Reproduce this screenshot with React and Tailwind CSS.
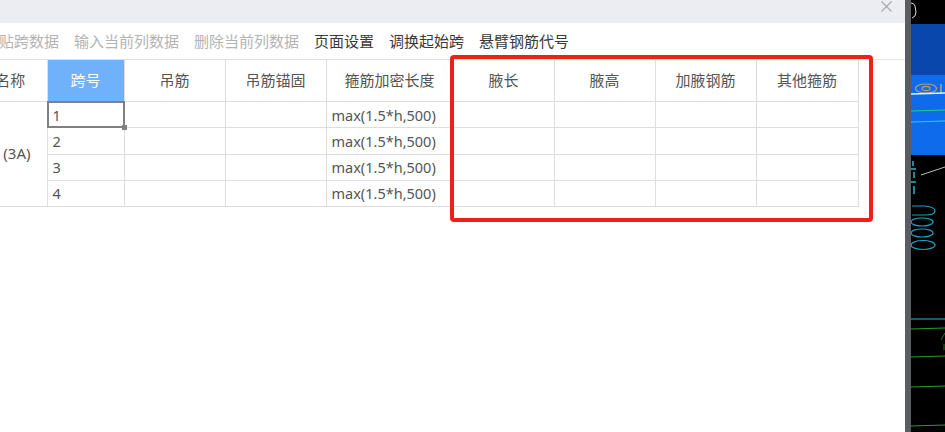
const cjk = { fontFamily: '"Noto Sans", "Noto Sans CJK SC", sans-serif' };

const toolbarItems = [
  { label: "粘贴跨数据", disabled: true },
  { label: "输入当前列数据", disabled: true },
  { label: "删除当前列数据", disabled: true },
  { label: "页面设置" },
  { label: "调换起始跨" },
  { label: "悬臂钢筋代号" },
];

const headers = ["吊筋", "吊筋锚固", "箍筋加密长度", "腋长", "腋高", "加腋钢筋", "其他箍筋"];
const rows = [
  { id: "1", h: "h-[26px]", text: "pt-[2px]" },
  { id: "2", h: "h-[27px]", text: "" },
  { id: "3", h: "h-[26px]", text: "" },
  { id: "4", h: "h-[26px]", text: "" },
];

const cell = "border border-[#dedede] p-0";

function CadPanel() {
  return (
    <svg className="h-full w-full block" viewBox="0 0 34 432">
      <rect width="34" height="432" fill="#000" />
      <path d="M0 3 Q3 3 4 6 L5 12 Q5 17 1 18" fill="none" stroke="#ddd" strokeWidth="1" />
      <rect y="24" width="34" height="51" fill="#0a47ad" />
      <rect y="75" width="34" height="80" fill="#0e6cec" />
      <g fill="none" stroke="#b59c78" strokeWidth="1.2">
        <ellipse cx="15" cy="88.5" rx="10.5" ry="4.5" />
        <ellipse cx="15" cy="88.5" rx="4" ry="2.2" />
        <path d="M30 84 V93" strokeWidth="1.6" />
      </g>
      <line x1="0" y1="94" x2="34" y2="93" stroke="#e4eefc" strokeWidth="1.5" />
      <line x1="0" y1="111" x2="34" y2="110" stroke="#1fd07a" strokeWidth="1" />
      <line x1="0" y1="122" x2="34" y2="121" stroke="#35c8f0" strokeWidth="1" />
      <path d="M2 161v5M0 169h5M3 172v6M0 182h5M3 186v8" stroke="#1a8c9c" strokeWidth="2" fill="none" />
      <line x1="10" y1="175" x2="34" y2="167" stroke="#b8b8b8" strokeWidth="1" />
      <g fill="none" stroke="#1d9fc4" strokeWidth="1.2">
        <path d="M1 206 H14 Q24 207 24 211 Q24 215 14 215 H1" />
        <ellipse cx="11" cy="222" rx="11" ry="4" />
        <ellipse cx="11" cy="233" rx="11" ry="4" />
        <ellipse cx="12" cy="245" rx="12" ry="4.5" />
      </g>
      <line x1="0" y1="319" x2="34" y2="319" stroke="#2bb6d0" strokeWidth="1" />
      <g stroke="#25a025" strokeWidth="1">
        <line x1="0" y1="329" x2="34" y2="328" />
        <line x1="0" y1="357" x2="34" y2="356" />
        <line x1="0" y1="387" x2="34" y2="386" />
        <line x1="0" y1="426" x2="34" y2="425" />
      </g>
      <path d="M30 340 L34 333 M33 344 V350" stroke="#1b7a1b" strokeWidth="1" />
    </svg>
  );
}

export default function App() {
  return (
    <div className="relative flex h-[432px] w-[945px] overflow-hidden bg-white" style={cjk}>
      {/* Dialog */}
      <div className="w-[905px] shrink-0 overflow-hidden">
        <div className="flex h-[23px] justify-end bg-[#ecedf2] pr-[13px]">
          <svg className="mt-px h-[11px] w-[11px]" viewBox="0 0 11 11" stroke="#a9a9ad" strokeWidth="1.2">
            <path d="M0.5 0.5 L10.5 10.5 M10.5 0.5 L0.5 10.5" />
          </svg>
        </div>

        <div className="-ml-[16px] flex h-[36px] items-center gap-[15px] text-[15px] whitespace-nowrap">
          {toolbarItems.map((item) => (
            <span key={item.label} className={item.disabled ? "text-[#b4b4b4]" : "text-[#3a3a3a]"}>
              {item.label}
            </span>
          ))}
        </div>

        {/* Table */}
        <div className="border-t border-[#e6e6e6]">
          <table className="-ml-[29px] -mt-px w-[887px] table-fixed border-collapse text-[15px] text-[#555]">
            <colgroup>
              <col className="w-[76px]" />
              <col className="w-[77px]" />
              <col className="w-[101px]" />
              <col className="w-[101px]" />
              <col className="w-[127px]" />
              <col className="w-[101px]" />
              <col className="w-[101px]" />
              <col className="w-[101px]" />
              <col className="w-[102px]" />
            </colgroup>
            <thead>
              <tr className="h-[42px]">
                <th className={`${cell} border-l-0 pl-[3px] font-normal`}>名称</th>
                <th className={`${cell} bg-[#70b1fb] font-normal text-white`}>跨号</th>
                {headers.map((h) => (
                  <th key={h} className={`${cell} font-normal`}>
                    {h}
                  </th>
                ))}
              </tr>
            </thead>
            <tbody>
              {rows.map((row, i) => (
                <tr key={row.id} className={row.h}>
                  {i === 0 && (
                    <td rowSpan={4} className={`${cell} border-l-0 pb-[2px] pr-[16px] text-right text-[15px]`}>
                      (3A)
                    </td>
                  )}
                  <td className={`${cell} ${row.text} relative pl-[5px] text-[14.5px] leading-none`}>
                    {row.id}
                    {i === 0 && (
                      <div className="absolute -bottom-px -left-px -right-px -top-px border-2 border-[#808080]">
                        <div className="absolute -bottom-[4px] -right-[4px] h-[5px] w-[5px] bg-[#808080]" />
                      </div>
                    )}
                  </td>
                  <td className={cell} />
                  <td className={cell} />
                  <td className={`${cell} ${row.text} pl-[5px] text-[14.5px] leading-none whitespace-nowrap`}>max(1.5*h,500)</td>
                  <td className={cell} />
                  <td className={cell} />
                  <td className={cell} />
                  <td className={cell} />
                </tr>
              ))}
            </tbody>
          </table>
        </div>
      </div>

      <div className="w-[6px] shrink-0 bg-[#5a5c60]" />
      <div className="flex-1">
        <CadPanel />
      </div>

      {/* Red annotation box */}
      <div className="absolute left-[450px] top-[55px] h-[167px] w-[423px] rounded-[4px] border-4 border-[#f02018]" />
    </div>
  );
}
